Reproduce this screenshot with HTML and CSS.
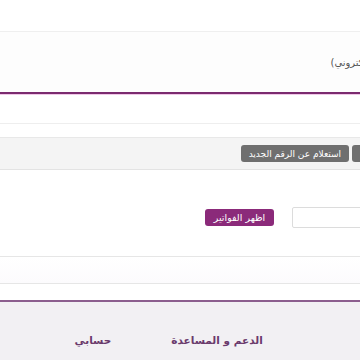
FILE: index.html
```html
<!DOCTYPE html>
<html lang="ar">
<head>
  <meta charset="UTF-8" />
  <title>الفواتير</title>
  <meta name="viewport" content="width=device-width, initial-scale=1" />
  <link rel="stylesheet" href="styles.css">
</head>
<body>
  <div class="pagina" dir="rtl">
    <div class="topo"></div>

    <div class="aviso">
      <span class="aviso-texto">ارسال الفاتورة (البريد الإلكتروني)</span>
    </div>

    <div class="vazio"></div>

    <div class="abas">
      <button class="btn-cinza btn-primeiro">الاستعلام</button>
      <button class="btn-cinza">استعلام عن الرقم الجديد</button>
    </div>

    <div class="busca">
      <input type="text" class="campo" />
      <button class="btn-roxo">اظهر الفواتير</button>
    </div>

    <div class="linha"></div>
    <div class="linha linha-fim"></div>

    <footer>
      <div class="rodape-links">
        <a href="#">الدعم و المساعدة</a>
        <a href="#">حسابي</a>
      </div>
    </footer>
  </div>
</body>
</html>
```

FILE: styles.css
```css
html, body {
  margin: 0;
  padding: 0;
  overflow: hidden;
  background: #fff;
}
body {
  font-family: "DejaVu Sans", sans-serif;
  color: #444;
}
.pagina {
  width: 440px;
}
.topo {
  height: 31px;
  border-bottom: 1px solid #efefef;
}
.aviso {
  height: 60px;
  background: #fdfdfd;
  display: flex;
  align-items: center;
  border-bottom: 2px solid #7b2a6f;
  box-shadow: 0 1px 0 #f0c8e8;
}
.aviso-texto {
  font-size: 10px;
  color: #555;
  margin-right: -30px;
}
.vazio {
  height: 29px;
  border-bottom: 1px solid #eeeeee;
  margin-bottom: 13px;
}
.abas {
  background: #f4f4f4;
  border-top: 1px solid #e8e8e8;
  border-bottom: 1px solid #e3e3e3;
  height: 31px;
  display: flex;
  align-items: center;
  gap: 3px;
  padding-right: 8px;
}
.btn-cinza {
  background: #6f6f6f;
  color: #fff;
  border: none;
  border-radius: 3px;
  font-family: "DejaVu Sans", sans-serif;
  font-size: 9px;
  height: 17px;
  padding: 0 8px;
}
.btn-primeiro {
  width: 80px;
}
.busca {
  display: flex;
  align-items: center;
  gap: 18px;
  margin-top: 37px;
  height: 21px;
}
.campo {
  width: 148px;
  height: 21px;
  box-sizing: border-box;
  border: 1px solid #dcdcdc;
  border-radius: 2px;
  margin: 0;
}
.btn-roxo {
  background: #8b2a7a;
  color: #fff;
  border: none;
  border-radius: 3px;
  font-family: "DejaVu Sans", sans-serif;
  font-size: 9.5px;
  height: 17px;
  width: 69px;
  padding: 0;
}
.linha {
  border-bottom: 1px solid #e6e6e6;
  height: 28px;
}
.linha-fim {
  height: 26px;
  background: linear-gradient(#fff, #fcfbfd);
}
footer {
  border-top: 2px solid #8c5e8e;
  margin-top: 16px;
  background: #f2f0f3;
  height: 60px;
}
.rodape-links {
  display: flex;
  padding-right: 161px;
  padding-top: 32px;
}
.rodape-links a {
  width: 124px;
  text-align: center;
  color: #6a3a6c;
  text-decoration: none;
  font-size: 10.5px;
  font-weight: bold;
}
```
